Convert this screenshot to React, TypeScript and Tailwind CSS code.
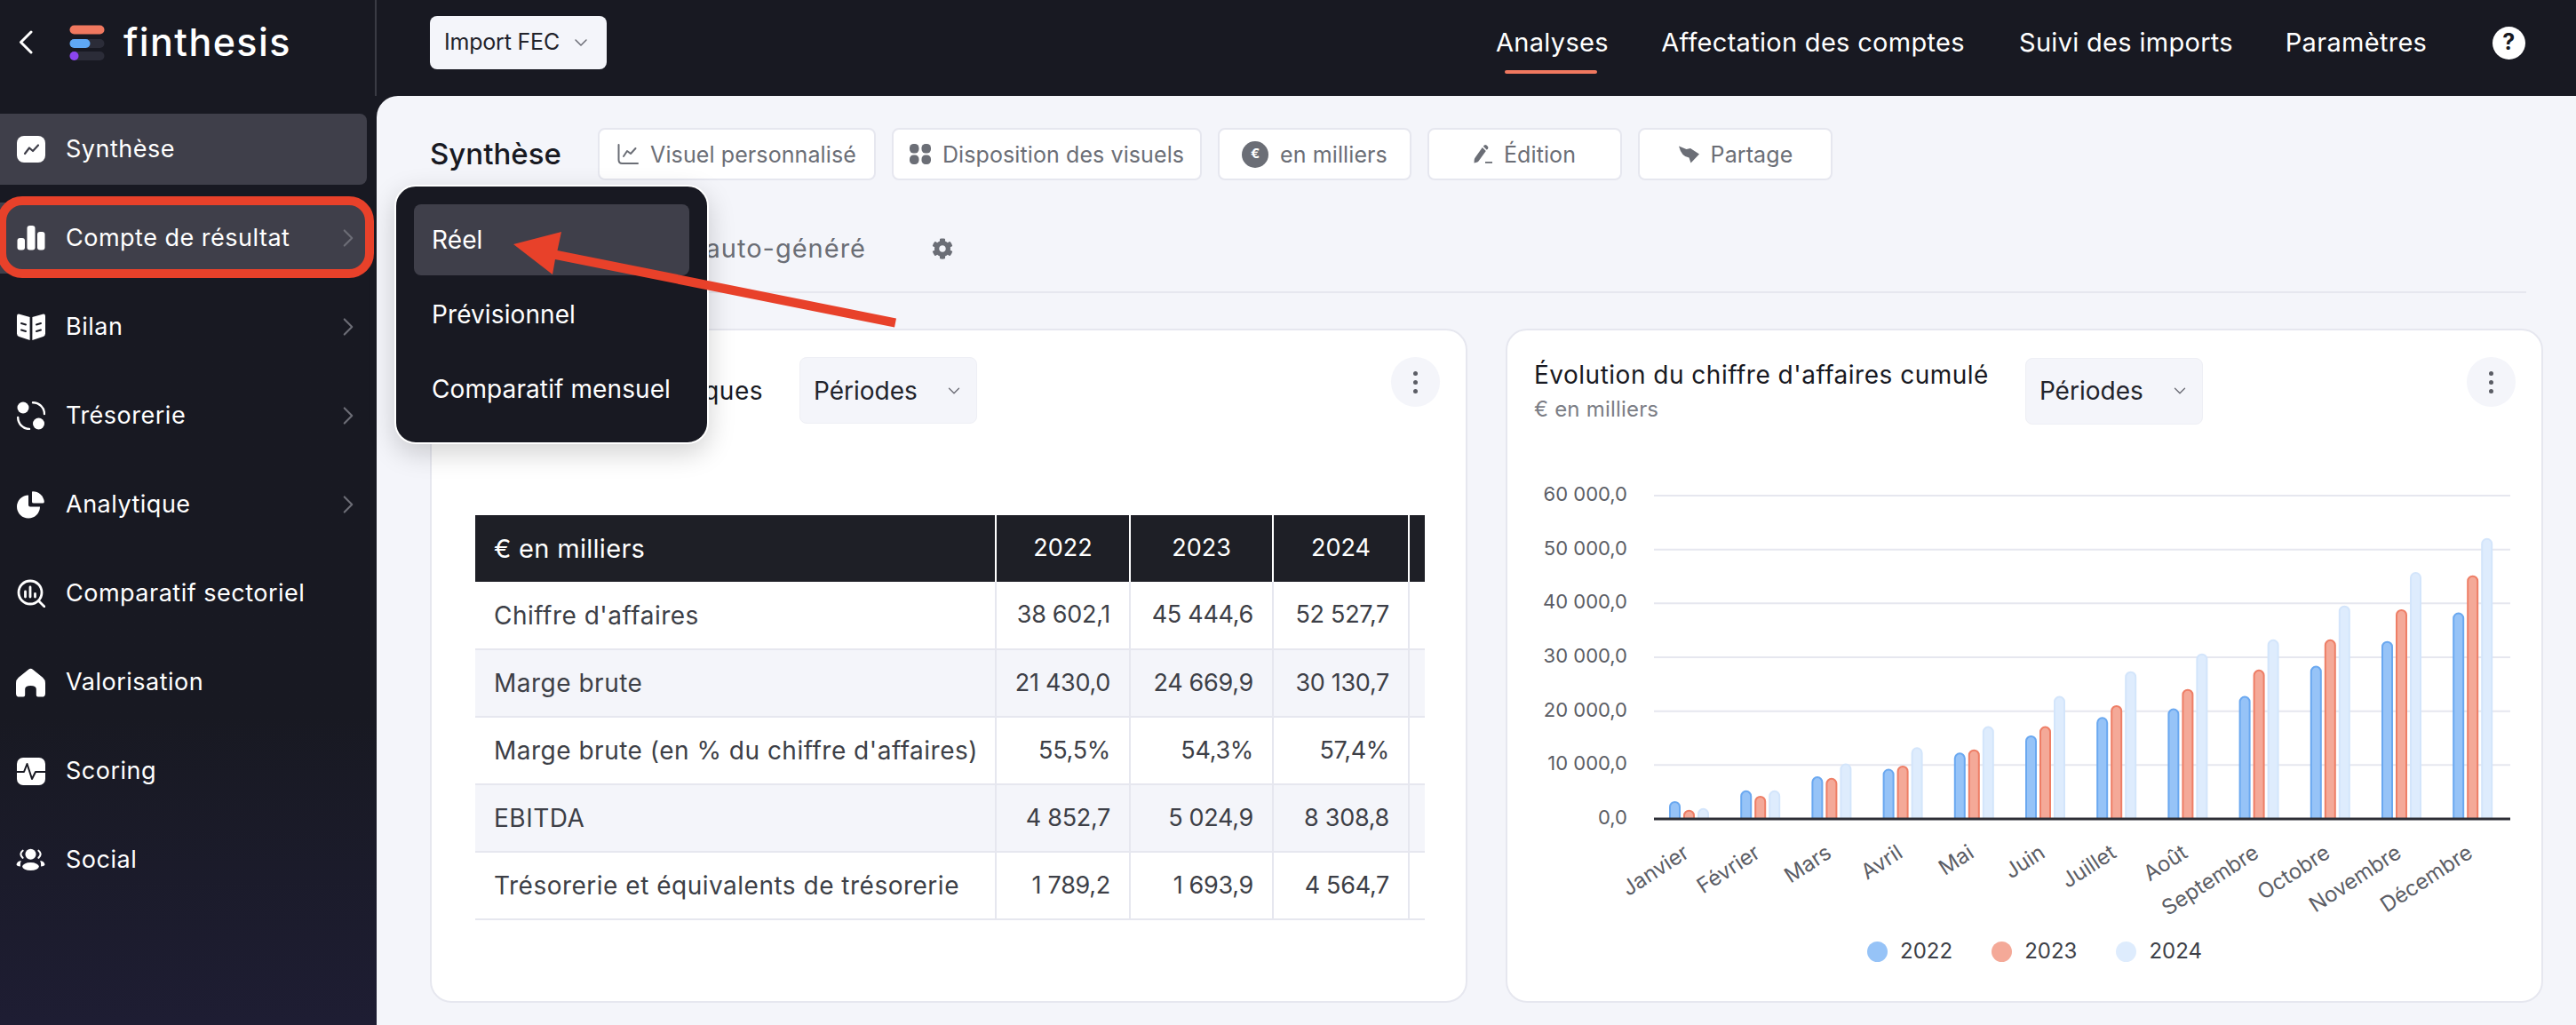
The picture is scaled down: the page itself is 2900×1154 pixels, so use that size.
import { ChevronDown, ChevronRight } from "lucide-react";
import { FaCog } from "react-icons/fa";

// sidebar icons
const SyntheseIcon = () => (
  <svg width="32" height="30" viewBox="0 0 32 30">
    <rect width="32" height="30" rx="8" fill="#fff" />
    <path d="M9 20 L14 13.5 L18 17 L24 10.5" fill="none" stroke="#3f3f4a" strokeWidth="2.2" strokeLinecap="round" strokeLinejoin="round" />
  </svg>
);
const BarsIcon = () => (
  <svg width="32" height="28" viewBox="0 0 32 28" fill="#fff">
    <rect x="0.5" y="14" width="8.5" height="13.5" rx="3" />
    <rect x="11.5" y="0" width="9" height="27.5" rx="3" />
    <rect x="23" y="7" width="8.5" height="20.5" rx="3" />
  </svg>
);
const BookIcon = () => (
  <svg width="32" height="30" viewBox="0 0 32 30">
    <path d="M0 3 Q0 0 3 0.7 L14.6 4 V30 L2.5 26 Q0 25 0 22.5 Z" fill="#fff" />
    <path d="M32 3 Q32 0 29 0.7 L17.4 4 V30 L29.5 26 Q32 25 32 22.5 Z" fill="#fff" />
    <path d="M5 11 L10 12.5 M5 18.5 L10 20 M27 11 L22 12.5 M27 18.5 L22 20" stroke="#181922" strokeWidth="2" strokeLinecap="round" />
  </svg>
);
const TresoIcon = () => (
  <svg width="32" height="32" viewBox="0 0 32 32" fill="none">
    <circle cx="7" cy="7" r="6.5" fill="#fff" />
    <circle cx="24.5" cy="25" r="6.5" fill="#fff" />
    <path d="M18 1.2 A13 13 0 0 1 31 14 M1.2 18 A13 13 0 0 0 14 31" stroke="#fff" strokeWidth="2.4" strokeLinecap="round" />
  </svg>
);
const PieIcon = () => (
  <svg width="31" height="31" viewBox="0 0 31 31" fill="#fff">
    <path d="M13 4.5 A13 13 0 1 0 26 17.5 H15 Q13 17.5 13 15.5 Z" />
    <path d="M17.5 0.2 A13 13 0 0 1 30.8 12 Q30.8 13.5 29 13.5 H19 Q17 13.5 17 12 V1 Z" />
  </svg>
);
const CompareIcon = () => (
  <svg width="32" height="32" viewBox="0 0 32 32" fill="none">
    <circle cx="15" cy="15" r="13" stroke="#fff" strokeWidth="2.8" />
    <path d="M25 25 L31 31" stroke="#fff" strokeWidth="2.8" strokeLinecap="round" />
    <path d="M9.5 14 V20 M15 9 V20 M20.5 16.5 V20" stroke="#fff" strokeWidth="2.8" strokeLinecap="round" />
  </svg>
);
const HouseIcon = () => (
  <svg width="34" height="33" viewBox="0 0 34 33" fill="#fff">
    <path d="M14.5 1.2 Q17 -0.6 19.5 1.2 L31 10.5 Q34 13 34 17 V29 Q34 33 30 33 H25.5 Q23.5 33 23.5 31 V24 Q23.5 20 17 20 Q10.5 20 10.5 24 V31 Q10.5 33 8.5 33 H4 Q0 33 0 29 V17 Q0 13 3 10.5 Z" />
  </svg>
);
const PulseIcon = () => (
  <svg width="32" height="31" viewBox="0 0 32 31">
    <rect width="32" height="31" rx="7" fill="#fff" />
    <path d="M0 16 H8 L11.5 7 L17 24 L21 16 H32" fill="none" stroke="#181922" strokeWidth="2" strokeLinejoin="round" />
  </svg>
);
const PeopleIcon = () => (
  <svg width="37" height="28" viewBox="0 0 37 28" fill="#fff">
    <circle cx="18.5" cy="7" r="6.8" />
    <ellipse cx="18.5" cy="22.5" rx="10.5" ry="5" />
    <path d="M8.5 2.5 Q3.5 6.5 8.5 11.5 M28.5 2.5 Q33.5 6.5 28.5 11.5" fill="none" stroke="#fff" strokeWidth="2.4" strokeLinecap="round" />
    <path d="M0.5 20 Q1.5 15.5 6.5 15 Q5 18.5 5.5 22.5 Q1.5 22.5 0.5 20 Z M36.5 20 Q35.5 15.5 30.5 15 Q32 18.5 31.5 22.5 Q35.5 22.5 36.5 20 Z" />
  </svg>
);

const navItems = [
  { label: "Synthèse", icon: <SyntheseIcon />, active: true },
  { label: "Compte de résultat", icon: <BarsIcon />, chevron: true, active: true, circled: true },
  { label: "Bilan", icon: <BookIcon />, chevron: true },
  { label: "Trésorerie", icon: <TresoIcon />, chevron: true },
  { label: "Analytique", icon: <PieIcon />, chevron: true },
  { label: "Comparatif sectoriel", icon: <CompareIcon /> },
  { label: "Valorisation", icon: <HouseIcon /> },
  { label: "Scoring", icon: <PulseIcon /> },
  { label: "Social", icon: <PeopleIcon /> },
];

function Sidebar() {
  return (
    <aside className="w-[424px] shrink-0 flex flex-col bg-gradient-to-b from-[#181922] from-70% to-[#1e1d33]">
      <div className="h-[108px] flex items-start border-r-2 border-[#3a3b44]">
        <svg width="16" height="27" viewBox="0 0 16 27" className="ml-[21px] mt-[34px]">
          <path d="M14 2 L2.5 13.5 L14 25" fill="none" stroke="#fff" strokeWidth="3" strokeLinecap="round" strokeLinejoin="round" />
        </svg>
        <svg width="40" height="40" viewBox="0 0 40 40" className="ml-[41px] mt-[28px]">
          <rect x="0.5" y="0.5" width="39" height="10" rx="5" fill="#F0785F" />
          <rect x="0.5" y="16" width="39" height="10" rx="5" fill="#2b2c38" />
          <rect x="0.5" y="16" width="23" height="10" rx="5" fill="#5FA8F5" />
          <rect x="0.5" y="30" width="39" height="10" rx="5" fill="#2b2c38" />
          <rect x="0.5" y="30" width="10" height="10" rx="5" fill="#8B45EE" />
        </svg>
        <span className="ml-[21px] mt-[21px] text-[43px] leading-[52px] font-medium tracking-[1.4px] text-white">finthesis</span>
      </div>
      <nav className="pt-5 flex flex-col gap-5">
        {navItems.map((item) => (
          <div
            key={item.label}
            className={`relative h-20 w-[413px] flex items-center pl-[18px] pr-[4px] rounded-r-lg text-white ${item.active ? "bg-[#3f3f4a]" : ""}`}
          >
            <div className="w-[33px] flex justify-center">{item.icon}</div>
            <span className="ml-[23px] text-[27px] flex-1 tracking-[0.5px]">{item.label}</span>
            {item.chevron && <ChevronRight size={34} strokeWidth={1.5} className="text-[#6c6d76]" />}
            {item.circled && (
              <div className="absolute -left-[3px] -top-[7px] w-[424px] h-[92px] border-[10px] border-[#E8412A] rounded-[28px]" />
            )}
          </div>
        ))}
      </nav>
    </aside>
  );
}

function TopBar() {
  return (
    <header className="h-[108px] shrink-0 flex items-center pb-3 pl-[60px] pr-[57px] text-white">
      <div className="w-[199px] h-[60px] rounded-lg bg-[#f4f5fa] flex items-center pl-4 text-[#22232b] text-[25px] tracking-[-0.2px]">
        Import FEC
        <ChevronDown size={24} strokeWidth={1.5} className="ml-3 text-[#6c6d76]" />
      </div>
      <nav className="ml-auto flex items-center text-[29px] tracking-[0.3px]">
        <span className="relative w-[125px] text-center">
          Analyses
          <span className="absolute left-[10px] top-[53px] w-[104px] h-1 rounded-sm bg-[#F0785F]" />
        </span>
        <span className="ml-[60px] w-[344px] text-center whitespace-nowrap">Affectation des comptes</span>
        <span className="ml-[60px] w-[237px] text-center whitespace-nowrap">Suivi des imports</span>
        <span className="ml-[61px] w-[163px] text-center">Paramètres</span>
        <span className="ml-[72px] w-[37px] h-[37px] rounded-full bg-white text-[#181922] text-[25px] font-bold flex items-center justify-center">?</span>
      </nav>
    </header>
  );
}

function ToolButton({ w, icon, label }: { w: string; icon: React.ReactNode; label: string }) {
  return (
    <button className={`${w} h-[59px] flex items-center justify-center gap-[13px] rounded-lg border-2 border-[#e6e7ef] bg-white text-[25px] tracking-[0.1px] text-[#6b6e76]`}>
      {icon}
      <span className="whitespace-nowrap pt-[2px]">{label}</span>
    </button>
  );
}

function Toolbar() {
  return (
    <div className="flex items-center h-[59px]">
      <h1 className="w-[189px] text-[33px] font-medium text-[#181922]">Synthèse</h1>
      <div className="flex gap-[18px]">
        <ToolButton
          w="w-[313px]"
          label="Visuel personnalisé"
          icon={
            <svg width="24" height="24" viewBox="0 0 24 24" fill="none" stroke="#6b6e76" strokeWidth="2" strokeLinecap="round" strokeLinejoin="round">
              <path d="M1.5 1 V18 Q1.5 22 5.5 22 H23" />
              <path d="M7 14 L11 8 L15 11 L20.5 5" />
            </svg>
          }
        />
        <ToolButton
          w="w-[349px]"
          label="Disposition des visuels"
          icon={
            <svg width="24" height="23" viewBox="0 0 24 23" fill="#6b6e76">
              <rect width="10.5" height="10.5" rx="4.5" />
              <rect x="13.5" width="10.5" height="10.5" rx="4.5" />
              <rect y="12.5" width="10.5" height="10.5" rx="4.5" />
              <rect x="13.5" y="12.5" width="10.5" height="10.5" rx="4.5" />
            </svg>
          }
        />
        <ToolButton
          w="w-[218px]"
          label="en milliers"
          icon={
            <span className="w-[30px] h-[30px] rounded-full bg-[#6b6e76] text-white text-[15px] font-bold flex items-center justify-center">€</span>
          }
        />
        <ToolButton
          w="w-[219px]"
          label="Édition"
          icon={
            <svg width="21" height="21" viewBox="0 0 21 21" fill="#6b6e76">
              <path d="M12 0.5 Q13 -0.3 14.5 0.5 L16 2 Q16.8 3.4 16 4.5 L14.8 5.8 L10.8 1.8 Z" />
              <path d="M9.8 3 L13.8 7 L5.5 18.5 Q4.5 19.8 2.5 20 L0.5 20.5 L0.7 17 Q0.8 15.5 2 14 Z" />
              <rect x="13" y="19" width="8" height="1.8" />
            </svg>
          }
        />
        <ToolButton
          w="w-[219px]"
          label="Partage"
          icon={
            <svg width="24" height="20" viewBox="0 0 24 20" fill="#6b6e76">
              <path d="M1 0.5 L9.5 4 L14 3 L24 9.5 L14.5 19.5 L12.5 13.5 Q4 12.5 1 0.5 Z" />
            </svg>
          }
        />
      </div>
    </div>
  );
}

function Kebab() {
  return (
    <div className="ml-auto w-[55px] h-[56px] rounded-full bg-[#f4f5fa] flex flex-col items-center justify-center gap-[5px] self-start">
      <span className="w-[5px] h-[5px] rounded-full bg-[#5b5d65]" />
      <span className="w-[5px] h-[5px] rounded-full bg-[#5b5d65]" />
      <span className="w-[5px] h-[5px] rounded-full bg-[#5b5d65]" />
    </div>
  );
}

function PeriodSelect() {
  return (
    <div className="w-[200px] h-[75px] shrink-0 rounded-lg bg-[#f4f5fa] border border-[#eeeff5] flex items-center pl-[15px] text-[28px] text-[#22232b]">
      Périodes
      <ChevronDown size={22} strokeWidth={1.5} className="ml-auto mr-[14px] text-[#6c6d76]" />
    </div>
  );
}

const rows = [
  ["Chiffre d'affaires", "38 602,1", "45 444,6", "52 527,7"],
  ["Marge brute", "21 430,0", "24 669,9", "30 130,7"],
  ["Marge brute (en % du chiffre d'affaires)", "55,5%", "54,3%", "57,4%"],
  ["EBITDA", "4 852,7", "5 024,9", "8 308,8"],
  ["Trésorerie et équivalents de trésorerie", "1 789,2", "1 693,9", "4 564,7"],
];

function KeyFigures() {
  return (
    <section className="h-[759px] rounded-3xl border-2 border-[#e6e7ef] bg-white pt-[30px] pl-[30px] pr-[29px]">
      <div className="flex items-center gap-[41px]">
        <h2 className="w-[343px] text-right text-[28px] tracking-[0.5px] text-[#181922] whitespace-nowrap">Données historiques</h2>
        <PeriodSelect />
        <Kebab />
      </div>
      <div className="mt-[103px] ml-[19px] mr-[17px] overflow-hidden">
        <table className="w-[1180px] table-fixed border-collapse text-[27px] text-[#3d3f47]">
          <colgroup>
            <col className="w-[586px]" />
            <col className="w-[151px]" />
            <col className="w-[161px]" />
            <col className="w-[153px]" />
            <col />
          </colgroup>
          <thead>
            <tr className="h-[75px] bg-[#1e1f26] text-white font-medium">
              <th className="pl-[21px] text-left font-normal text-[29px] tracking-[0.3px]">€ en milliers</th>
              <th className="font-normal border-l-2 border-white">2022</th>
              <th className="font-normal border-l-2 border-white">2023</th>
              <th className="font-normal border-l-2 border-white">2024</th>
              <th className="border-l-2 border-white" />
            </tr>
          </thead>
          <tbody>
            {rows.map((row, i) => (
              <tr key={row[0]} className={`h-[76px] border-b-2 border-[#e6e7ef] ${i % 2 === 1 ? "bg-[#f4f5fa]" : "bg-white"}`}>
                <td className="pl-[21px] whitespace-nowrap text-[28px] tracking-[0.5px]">{row[0]}</td>
                {row.slice(1).map((cell, j) => (
                  <td key={j} className="pr-[21px] text-right border-l-2 border-[#e6e7ef] whitespace-nowrap tracking-[-0.3px]">{cell}</td>
                ))}
                <td className="border-l-2 border-[#e6e7ef]" />
              </tr>
            ))}
          </tbody>
        </table>
      </div>
    </section>
  );
}

const months = ["Janvier", "Février", "Mars", "Avril", "Mai", "Juin", "Juillet", "Août", "Septembre", "Octobre", "Novembre", "Décembre"];
const series = [
  { fill: "#96C3F7", stroke: "#6AA8F0", values: [3.3, 5.3, 7.9, 9.3, 12.3, 15.5, 18.9, 20.5, 22.8, 28.4, 33, 38.3] },
  { fill: "#F4A998", stroke: "#EE7E66", values: [1.7, 4.3, 7.6, 9.9, 12.9, 17.2, 21.1, 24.1, 27.7, 33.3, 38.9, 45.2] },
  { fill: "#DEECFD", stroke: "#D3E5FB", values: [2, 5.3, 10.3, 13.3, 17.2, 22.8, 27.4, 30.7, 33.3, 39.6, 45.8, 52.1] },
];
const ticks = ["0,0", "10 000,0", "20 000,0", "30 000,0", "40 000,0", "50 000,0", "60 000,0"];
const BASE = 921;
const UNIT = 6.07;

function barPath(x: number, h: number) {
  const w = 11;
  const r = 5.5;
  const left = x + 1;
  const top = BASE - h + 1;
  return `M${left} ${BASE} V${top + r} A${r} ${r} 0 0 1 ${left + w} ${top + r} V${BASE}`;
}

function ChartCard() {
  return (
    <section className="h-[759px] rounded-3xl border-2 border-[#e6e7ef] bg-white pt-[30px] pl-[30px] pr-[29px]">
      <div className="flex items-center gap-[41px]">
        <div>
          <h2 className="text-[28px] tracking-[0.5px] leading-[40px] text-[#181922] whitespace-nowrap">Évolution du chiffre d'affaires cumulé</h2>
          <p className="text-[24px] tracking-[0.2px] leading-[35px] text-[#7b7d85] pt-[1px]">€ en milliers</p>
        </div>
        <PeriodSelect />
        <Kebab />
      </div>
      <svg width="1164" height="526" viewBox="1697 520 1164 526" className="-ml-[30px] mt-[43px]">
        {ticks.map((t, i) => {
          const y = BASE - i * 60.67;
          return (
            <g key={t}>
              {i > 0 && <line x1="1862" x2="2826" y1={y} y2={y} stroke="#e6e7ef" strokeWidth="2" />}
              <text x="1832" y={y + 6} textAnchor="end" className="fill-[#5b5d65] text-[22px]">{t}</text>
            </g>
          );
        })}
        {months.map((m, i) => {
          const gx = 1879 + i * 80.2;
          return (
            <g key={m}>
              {series.map((s, k) => (
                <path key={k} d={barPath(gx + k * 16, s.values[i] * UNIT)} fill={s.fill} stroke={s.stroke} strokeWidth="2" />
              ))}
              <text
                x={gx + 24}
                y={963}
                textAnchor="end"
                transform={`rotate(-33 ${gx + 24} 963)`}
                className="fill-[#5b5d65] text-[24px]"
              >
                {m}
              </text>
            </g>
          );
        })}
        <line x1="1862" x2="2826" y1={BASE} y2={BASE} stroke="#2e2f36" strokeWidth="3" />
      </svg>
      <div className="mt-[6px] ml-[22px] flex justify-center gap-[44px] text-[24px] text-[#3d3f47]">
        {[
          ["2022", "bg-[#96C3F7]"],
          ["2023", "bg-[#F4A998]"],
          ["2024", "bg-[#DEECFD]"],
        ].map(([year, color]) => (
          <div key={year} className="flex items-center gap-[14px]">
            <span className={`w-[23px] h-[23px] rounded-full ${color}`} />
            {year}
          </div>
        ))}
      </div>
    </section>
  );
}

export default function App() {
  return (
    <div className="relative w-[2900px] h-[1154px] flex overflow-hidden bg-[#181922] font-[family-name:Inter,sans-serif]">
      <Sidebar />
      <div className="flex-1 flex flex-col min-w-0">
        <TopBar />
        <main className="flex-1 rounded-tl-3xl bg-[#f4f5fa] pl-[60px] pt-9">
          <Toolbar />
          <div className="w-[2360px] h-[127px] border-b-2 border-[#e6e7ef] pt-[28px] flex items-center text-[29px] tracking-[1px] leading-[46px] text-[#6b6e76]">
            <span className="w-[491px] text-right whitespace-nowrap">Rapport auto-généré</span>
            <FaCog size={24} className="ml-[74px] text-[#6b6e76]" />
          </div>
          <div className="mt-10 w-[2379px] grid grid-cols-2 gap-[43px]">
            <KeyFigures />
            <ChartCard />
          </div>
        </main>
      </div>

      {/* menu ouvert sur Compte de résultat */}
      <div className="absolute left-[444px] top-[208px] w-[354px] h-[292px] rounded-3xl border-2 border-white bg-[#181922] shadow-[0_10px_30px_rgba(0,0,0,0.18)] px-5 py-5 text-[28px] tracking-[0.1px] text-white">
        <div className="h-20 rounded-lg bg-[#3f3f4a] flex items-center pl-5">Réel</div>
        <div className="h-[88px] flex items-center pl-5">Prévisionnel</div>
        <div className="h-20 flex items-center pl-5 whitespace-nowrap">Comparatif mensuel</div>
      </div>

      {/* flèche d'annotation */}
      <svg width="2900" height="1154" viewBox="0 0 2900 1154" className="absolute inset-0 pointer-events-none">
        <path d="M578 275 L632 261 L627.5 282 L1009 358.5 L1007 368.5 L625 292 L622 309 Z" fill="#E8412A" />
      </svg>
    </div>
  );
}
